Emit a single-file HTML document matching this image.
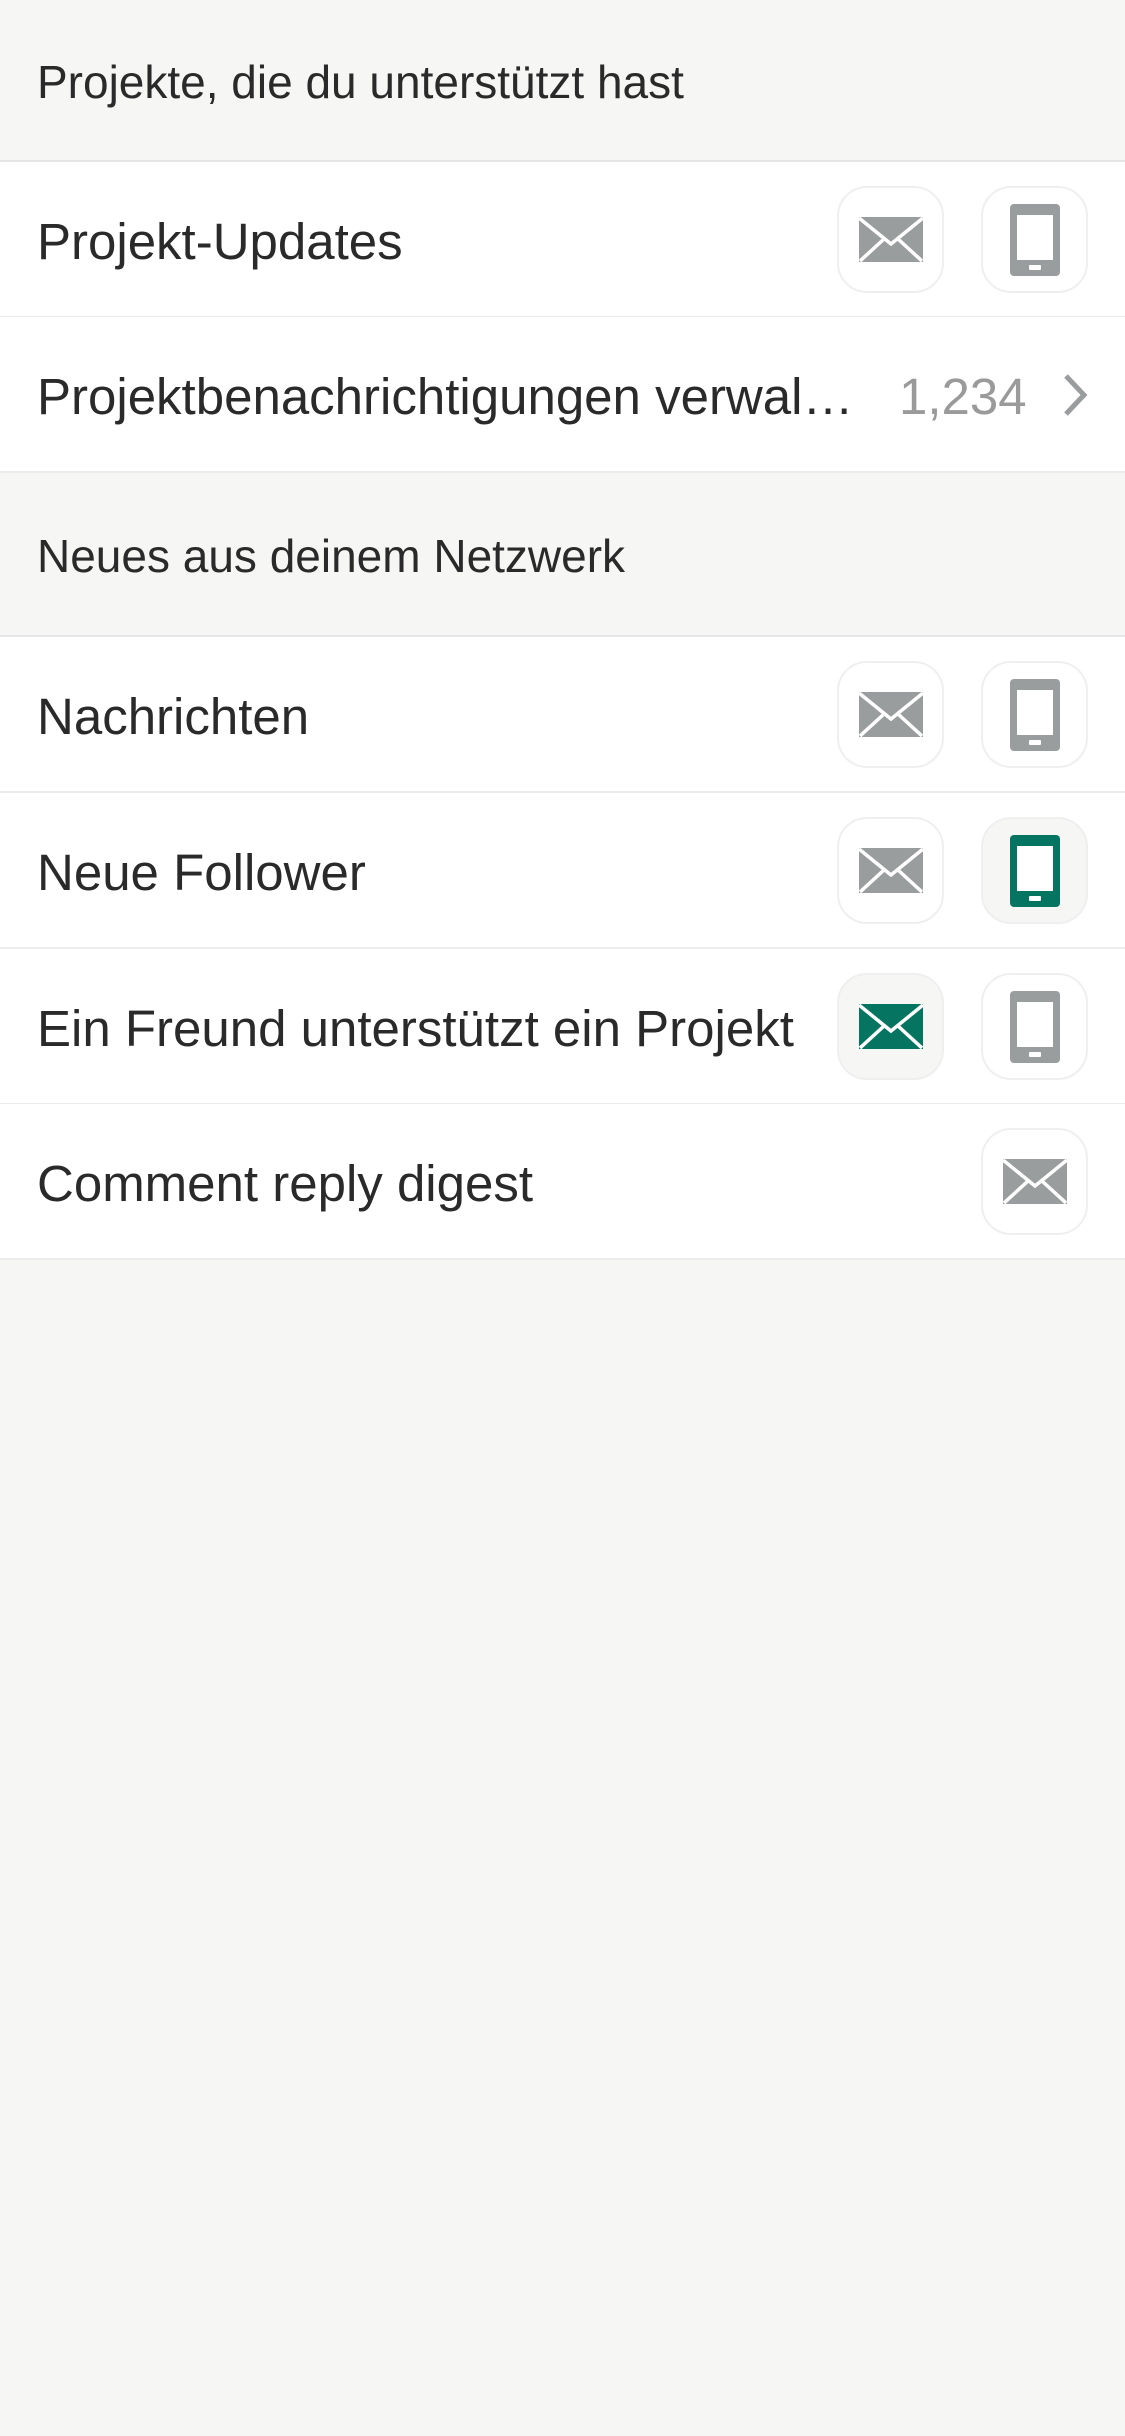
<!DOCTYPE html>
<html><head><meta charset="utf-8"><style>
*{margin:0;padding:0;box-sizing:border-box}
body{width:1125px;height:2436px;background:#f6f6f5;font-family:"Liberation Sans",sans-serif;color:#2a2a2a;position:relative;overflow:hidden}
.hdr{position:absolute;left:0;width:1125px;font-size:46px;display:flex;align-items:center;padding-left:37px;padding-top:4px;border-bottom:2px solid #e6e6e6}
.row{position:absolute;left:0;width:1125px;height:156px;background:#fff;border-bottom:2px solid #ececec;font-size:51px;display:flex;align-items:center;padding-left:37px;padding-top:4px;white-space:nowrap}
.btn{position:absolute;top:24px;width:107px;height:107px;border:2px solid #efefef;border-radius:30px;background:#fff;display:flex;align-items:center;justify-content:center}
.btn.on{background:#f6f6f5}
.b1{left:837px}.b2{left:981px}
</style></head><body>
<svg width="0" height="0" style="position:absolute">
<defs>
<symbol id="env" viewBox="0 0 64 45"><rect x="0" y="0" width="64" height="45" fill="currentColor"/><path d="M0 1 L32 27 L64 1 M1 44 L25 22 M63 44 L39 22" stroke="#fff" stroke-width="3.5" fill="none"/></symbol>
<symbol id="ph" viewBox="0 0 50 72"><rect x="0" y="0" width="50" height="72" rx="4" fill="currentColor"/><rect x="7" y="11" width="36" height="45" fill="#fff"/><rect x="19" y="61" width="12" height="5" rx="1" fill="#fff"/></symbol>
</defs></svg>

<div class="hdr" style="top:0;height:162px">Projekte, die du unterstützt hast</div>
<div class="row" style="top:162px">Projekt-Updates
<div class="btn b1"><svg width="64" height="45" style="color:#9a9d9d"><use href="#env"/></svg></div>
<div class="btn b2"><svg width="50" height="72" style="color:#9a9d9d"><use href="#ph"/></svg></div></div>
<div class="row" style="top:317px">Projektbenachrichtigungen verwal…
<span style="position:absolute;left:899px;color:#9a9a9a">1,234</span>
<svg style="position:absolute;left:1060px;top:56px" width="30" height="44"><path d="M6 3 L24 22 L6 41" stroke="#9a9d9d" stroke-width="5" fill="none"/></svg></div>
<div class="hdr" style="top:473px;height:164px">Neues aus deinem Netzwerk</div>
<div class="row" style="top:637px">Nachrichten
<div class="btn b1"><svg width="64" height="45" style="color:#9a9d9d"><use href="#env"/></svg></div>
<div class="btn b2"><svg width="50" height="72" style="color:#9a9d9d"><use href="#ph"/></svg></div></div>
<div class="row" style="top:793px">Neue Follower
<div class="btn b1"><svg width="64" height="45" style="color:#9a9d9d"><use href="#env"/></svg></div>
<div class="btn b2 on"><svg width="50" height="72" style="color:#057562"><use href="#ph"/></svg></div></div>
<div class="row" style="top:949px">Ein Freund unterstützt ein Projekt
<div class="btn b1 on"><svg width="64" height="45" style="color:#057562"><use href="#env"/></svg></div>
<div class="btn b2"><svg width="50" height="72" style="color:#9a9d9d"><use href="#ph"/></svg></div></div>
<div class="row" style="top:1104px">Comment reply digest
<div class="btn b2"><svg width="64" height="45" style="color:#9a9d9d"><use href="#env"/></svg></div></div>
</body></html>
